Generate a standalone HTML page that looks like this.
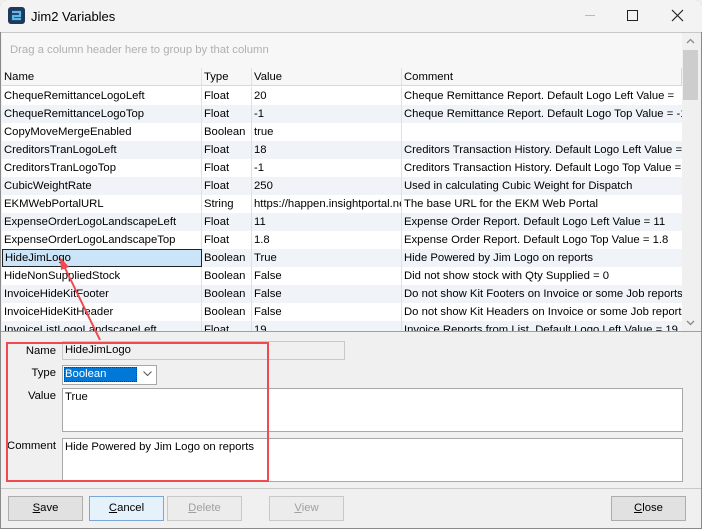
<!DOCTYPE html>
<html><head><style>
*{box-sizing:border-box;margin:0;padding:0}
body{width:702px;height:529px;background:#f0f0f0;font-family:"Liberation Sans",sans-serif;font-size:11.3px;color:#000;position:relative;overflow:hidden}
.a{position:absolute}
.win{left:0;top:0;width:702px;height:529px;border:1px solid #8a8a8a;border-radius:7px 7px 0 0;background:#f0f0f0}
.title{left:0;top:0;width:702px;height:32px;background:#f3f3f3;border-radius:7px 7px 0 0}
.row{position:absolute;left:2px;width:680px;height:18px;line-height:18px;white-space:nowrap;overflow:hidden}
.row span{position:absolute;top:0;padding-left:2px;height:18px;overflow:hidden}
.c1{left:0;width:200px;border-right:1px solid #e0e0e0}
.c2{left:200px;width:50px;border-right:1px solid #e0e0e0}
.c3{left:250px;width:150px;border-right:1px solid #e0e0e0}
.c4{left:400px;width:280px}
.alt{background:#f0f4f9}
.btn{position:absolute;top:496px;height:25px;width:75px;border:1px solid #adadad;background:#e1e1e1;text-align:center;line-height:23px}
.dis{color:#a0a0a0;border-color:#c8c8c8;background:#ececec}
.lbl{position:absolute;text-align:right;width:56px;left:0px}
</style></head><body>
<div class="a win"></div>
<div class="a title"></div>
<svg class="a" style="left:8px;top:7px" width="17" height="17"><rect x="0" y="0" width="17" height="17" rx="3" fill="#1b3a5c"/><path d="M4 5h8v4H5v3h8" stroke="#5fb7e8" stroke-width="2.2" fill="none"/></svg>
<div class="a" style="left:31px;top:9px;font-size:13px">Jim2 Variables</div>
<div class="a" style="left:585px;top:15px;width:10px;height:1px;background:#bbb"></div>
<div class="a" style="left:627px;top:10px;width:11px;height:11px;border:1px solid #222"></div>
<svg class="a" style="left:671px;top:9px" width="13" height="13"><path d="M1 1L12 12M12 1L1 12" stroke="#222" stroke-width="1.2"/></svg>
<div class="a" style="left:1px;top:32px;width:700px;height:1px;background:#c8c8c8"></div>
<!-- grid -->
<div class="a" style="left:2px;top:33px;width:680px;height:298px;background:#fff"></div>
<div class="a" style="left:2px;top:33px;width:680px;height:35px;background:#f7f7f7"></div>
<div class="a" style="left:10px;top:44px;color:#b0b0b0">Drag a column header here to group by that column</div>
<div class="row" style="top:68px;background:#f7f7f7;border-bottom:1px solid #d8d8d8"><span class="c1">Name</span><span class="c2">Type</span><span class="c3">Value</span><span class="c4" style="border-right:1px solid #d8d8d8">Comment</span></div>
<div class="row" style="top:87px"><span class="c1">ChequeRemittanceLogoLeft</span><span class="c2">Float</span><span class="c3">20</span><span class="c4">Cheque Remittance Report. Default Logo Left Value =</span></div>
<div class="row alt" style="top:105px"><span class="c1">ChequeRemittanceLogoTop</span><span class="c2">Float</span><span class="c3">-1</span><span class="c4">Cheque Remittance Report. Default Logo Top Value = -1</span></div>
<div class="row" style="top:123px"><span class="c1">CopyMoveMergeEnabled</span><span class="c2">Boolean</span><span class="c3">true</span><span class="c4"></span></div>
<div class="row alt" style="top:141px"><span class="c1">CreditorsTranLogoLeft</span><span class="c2">Float</span><span class="c3">18</span><span class="c4">Creditors Transaction History. Default Logo Left Value =</span></div>
<div class="row" style="top:159px"><span class="c1">CreditorsTranLogoTop</span><span class="c2">Float</span><span class="c3">-1</span><span class="c4">Creditors Transaction History. Default Logo Top Value =</span></div>
<div class="row alt" style="top:177px"><span class="c1">CubicWeightRate</span><span class="c2">Float</span><span class="c3">250</span><span class="c4">Used in calculating Cubic Weight for Dispatch</span></div>
<div class="row" style="top:195px"><span class="c1">EKMWebPortalURL</span><span class="c2">String</span><span class="c3">https://happen.insightportal.net</span><span class="c4">The base URL for the EKM Web Portal</span></div>
<div class="row alt" style="top:213px"><span class="c1">ExpenseOrderLogoLandscapeLeft</span><span class="c2">Float</span><span class="c3">11</span><span class="c4">Expense Order Report. Default Logo Left Value = 11</span></div>
<div class="row" style="top:231px"><span class="c1">ExpenseOrderLogoLandscapeTop</span><span class="c2">Float</span><span class="c3">1.8</span><span class="c4">Expense Order Report. Default Logo Top Value = 1.8</span></div>
<div class="row alt" style="top:249px"><span class="c1" style="background:#cce4f7;border:1px solid #222;line-height:16px">HideJimLogo</span><span class="c2">Boolean</span><span class="c3">True</span><span class="c4">Hide Powered by Jim Logo on reports</span></div>
<div class="row" style="top:267px"><span class="c1">HideNonSuppliedStock</span><span class="c2">Boolean</span><span class="c3">False</span><span class="c4">Did not show stock with Qty Supplied = 0</span></div>
<div class="row alt" style="top:285px"><span class="c1">InvoiceHideKitFooter</span><span class="c2">Boolean</span><span class="c3">False</span><span class="c4">Do not show Kit Footers on Invoice or some Job reports</span></div>
<div class="row" style="top:303px"><span class="c1">InvoiceHideKitHeader</span><span class="c2">Boolean</span><span class="c3">False</span><span class="c4">Do not show Kit Headers on Invoice or some Job reports</span></div>
<div class="row alt" style="top:321px;height:10px"><span class="c1">InvoiceListLogoLandscapeLeft</span><span class="c2">Float</span><span class="c3">19</span><span class="c4">Invoice Reports from List. Default Logo Left Value = 19</span></div>
<!-- scrollbar -->
<div class="a" style="left:682px;top:33px;width:17px;height:298px;background:#f0f0f0"></div>
<div class="a" style="left:683px;top:50px;width:15px;height:50px;background:#cdcdcd"></div>
<svg class="a" style="left:686px;top:38px" width="9" height="6"><path d="M1 5L4.5 1.5L8 5" stroke="#888" stroke-width="1.3" fill="none"/></svg>
<svg class="a" style="left:686px;top:320px" width="9" height="6"><path d="M1 1L4.5 4.5L8 1" stroke="#888" stroke-width="1.3" fill="none"/></svg>
<div class="a" style="left:1px;top:331px;width:700px;height:1px;background:#a0a0a0"></div>
<!-- edit panel -->
<div class="lbl" style="top:345px">Name</div>
<div class="a" style="left:62px;top:341px;width:283px;height:19px;border:1px solid #c8c8c8;background:#f0f0f0;padding:0 2px;line-height:17px">HideJimLogo</div>
<div class="lbl" style="top:367px">Type</div>
<div class="a" style="left:62px;top:365px;width:95px;height:20px;border:1px solid #a8a8a8;background:#fff"></div>
<div class="a" style="left:64px;top:367px;width:73px;height:15px;background:#0078d7;color:#fff;line-height:13px;border:1px dotted #333">Boolean</div>
<svg class="a" style="left:143px;top:371px" width="9" height="6"><path d="M0.5 0.5L4.5 4.5L8.5 0.5" stroke="#555" fill="none"/></svg>
<div class="lbl" style="top:390px">Value</div>
<div class="a" style="left:62px;top:388px;width:621px;height:44px;border:1px solid #a8a8a8;background:#fff;padding:2px 2px">True</div>
<div class="lbl" style="top:440px">Comment</div>
<div class="a" style="left:62px;top:438px;width:621px;height:44px;border:1px solid #a8a8a8;background:#fff;padding:2px 2px">Hide Powered by Jim Logo on reports</div>
<div class="a" style="left:6px;top:342px;width:263px;height:140px;border:2px solid #f04a4f"></div>
<svg class="a" style="left:0;top:250px" width="120" height="100"><path d="M100 90L64 16" stroke="#f04a4f" stroke-width="2"/><path d="M60 7L69 17L61 20Z" fill="#f04a4f"/></svg>
<div class="a" style="left:1px;top:488px;width:700px;height:1px;background:#c8c8c8"></div>
<div class="btn" style="left:8px"><u>S</u>ave</div>
<div class="btn" style="left:89px;border-color:#7aa7d6;background:#e5f1fb"><u>C</u>ancel</div>
<div class="btn dis" style="left:167px"><u>D</u>elete</div>
<div class="btn dis" style="left:269px"><u>V</u>iew</div>
<div class="btn" style="left:611px"><u>C</u>lose</div>
</body></html>
